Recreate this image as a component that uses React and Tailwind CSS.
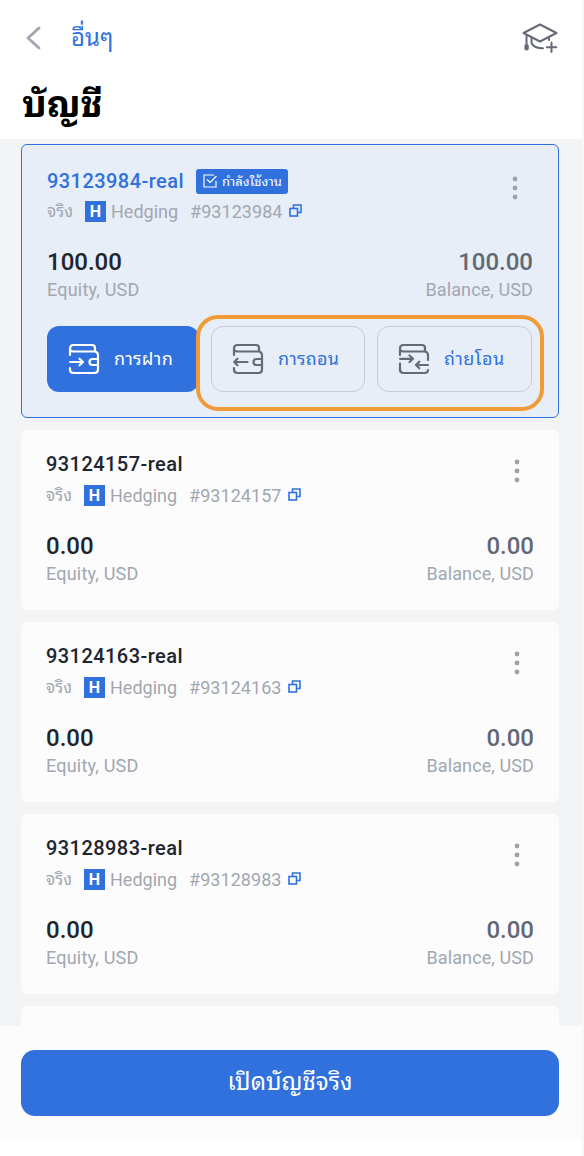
import React from 'react';
import clsx from 'clsx';

const accounts = [
    { id: '93123984', amount: '100.00', active: true },
    { id: '93124157', amount: '0.00' },
    { id: '93124163', amount: '0.00' },
    { id: '93128983', amount: '0.00' },
];

const WalletIcon = ({ type, className }) => (
    <svg width="32" height="32" viewBox="0 0 32 32" fill="none" stroke="currentColor" strokeWidth="2.2" strokeLinecap="round" strokeLinejoin="round" className={className}>
        <path d="M2 12V5.5Q2 2 5.5 2H24Q27 2 27 5V8M2 6Q2 8.5 5.5 8.5H26Q30 8.5 30 12.5" />
        {type === 'transfer' ? (
            <>
                <path d="M30 12.5V17M30 27Q30 30 26.5 30H5.5Q2 30 2 26.5V20.5" />
                <path d="M2 15.8H15M11.5 12.5L15 15.8L11.5 19" />
                <path d="M30 22H18M21.3 18.7L18 22L21.3 25.3" />
            </>
        ) : (
            <>
                <path d="M30 12.5V26.5Q30 30 26.5 30H5.5Q2 30 2 26.5V25" />
                <path d="M30 16H24.5Q21.5 16 21.5 19T24.5 22H30" />
                {type === 'deposit'
                    ? <path d="M2 19H15M11.5 15.7L15 19L11.5 22.3" />
                    : <path d="M15.5 19H2.5M5.5 15.7L2.2 19L5.5 22.3" />}
            </>
        )}
    </svg>
);

const GraduationIcon = () => (
    <svg width="36" height="30" viewBox="0 0 36 30" fill="none" stroke="currentColor" strokeWidth="2" strokeLinecap="round" strokeLinejoin="round">
        <path d="M1.5 10L18 1.5L34.5 10L18 18.5L1.5 10ZM4.5 11.5V22" />
        <path d="M9.5 14.5V20Q12 25.3 21 25.3M27 14.5V17" />
        <path d="M29.5 19.5V29M24.8 24.2H34.3" />
        <rect x="3.4" y="22" width="2.4" height="4.5" rx="1.1" fill="currentColor" />
    </svg>
);

const CopyIcon = () => (
    <svg width="13" height="13" viewBox="0 0 13 13" fill="none" stroke="#3071dd" strokeWidth="1.6">
        <path d="M4.5 4.5V1H12V8.5H8.8" />
        <rect x="1" y="4.5" width="7.5" height="7.5" />
    </svg>
);

const CheckIcon = () => (
    <svg width="14" height="14" viewBox="0 0 14 14" fill="none" stroke="white" strokeWidth="1.2">
        <path d="M11 1H1V13H13V7M4 5.5L7.2 8.5L13.5 2" />
    </svg>
);

const DotsIcon = () => (
    <svg width="6" height="24" viewBox="0 0 6 24" fill="#9ca1ab">
        <circle cx="3" cy="3" r="2.4" />
        <circle cx="3" cy="12" r="2.4" />
        <circle cx="3" cy="21" r="2.4" />
    </svg>
);

const ActionButton = ({ type, label, className }) => (
    <button
        className={clsx('flex h-[66px] items-center rounded-xl', className,
            type === 'deposit' ? 'bg-[#3071dd] pl-[21px] text-white' : 'border-[1.5px] border-[#c9ccd6] pl-5 text-[#3071dd]')}
    >
        <WalletIcon type={type} className={type === 'deposit' ? 'text-white' : 'text-[#666a77]'} />
        <span className={clsx('ml-3.5 pb-0.5 text-[18px] whitespace-nowrap', type === 'transfer' ? 'tracking-[0.5px]' : 'tracking-[0.3px]')}>{label}</span>
    </button>
);

const AccountCard = ({ account }) => {
    const { id, amount, active } = account;

    return (
        <section
            className={clsx('rounded-md', active
                ? 'relative h-[274px] border-[1.5px] border-[#3071dd] bg-[#e7eef7] px-[25px] pt-[22px]'
                : 'h-[180px] bg-[#fcfcfd] pt-5 pr-[25px] pl-[25px]')}
        >
            <div className="flex h-7 items-center">
                <h2 className={clsx('w-[137px] text-[20px] font-medium tracking-[0.44px]', active ? 'text-[#3071dd]' : 'text-[#20242d]')}>{id}-real</h2>
                {active && (
                    <span className="ml-3 flex h-[25px] w-[92px] items-center gap-[5px] rounded-[3px] bg-[#3071dd] pl-[7px] text-[13px] whitespace-nowrap text-white">
                        <CheckIcon />
                        <span className="pt-px">กำลังใช้งาน</span>
                    </span>
                )}
                <span className={clsx('ml-auto pt-3.5', active ? 'mr-[15px]' : 'mr-3.5')}><DotsIcon /></span>
            </div>
            <div className={clsx('flex h-6 items-center text-[18px] text-[#a2a7b1]', active ? 'mt-1' : 'mt-[5px]')}>
                <span className="w-[38px] pt-0.5 text-[17px]">จริง</span>
                <span className="mr-[5px] flex h-[21px] w-[21px] items-center justify-center bg-[#3071dd] pt-px text-[16px] font-bold text-white">H</span>
                <span className="w-[79px]">Hedging</span>
                <span className="mr-[7px] w-[92px] tracking-[0.05px]">#{id}</span>
                <span className="pb-0.5"><CopyIcon /></span>
            </div>
            <div className="mt-[23px] flex justify-between text-[24px] leading-8 font-medium">
                <span className="text-[#20242d]">{amount}</span>
                <span className="text-[#626875]">{amount}</span>
            </div>
            <div className="flex justify-between text-[18px] leading-6 text-[#a2a7b1]">
                <span className="tracking-[0.2px]">Equity, USD</span>
                <span className="tracking-[0.1px]">Balance, USD</span>
            </div>
            {active && (
                <>
                    <div className="mt-6 flex gap-3">
                        <ActionButton type="deposit" label="การฝาก" className="w-[152px]" />
                        <ActionButton type="withdraw" label="การถอน" className="w-[154px]" />
                        <ActionButton type="transfer" label="ถ่ายโอน" className="w-[155px]" />
                    </div>
                    <div className="pointer-events-none absolute top-[170px] left-[174px] h-[96px] w-[348px] rounded-[22px] border-4 border-[#f19a38]" />
                </>
            )}
        </section>
    );
};

const App = () => {
    return (
        <div className="flex h-[1156px] w-[584px] flex-col overflow-hidden border-r-2 border-[#f7f7f7] bg-white font-[Roboto,'Noto_Sans_Thai_Looped',Loma,Garuda,'Noto_Serif_Thai','Noto_Sans_Thai',sans-serif]">
            <header className="h-[139px] shrink-0 px-[22px]">
                <nav className="flex h-[75px] items-center">
                    <svg width="22" height="26" viewBox="0 0 22 26" fill="none" stroke="#a2a7b1" strokeWidth="3" strokeLinecap="round" strokeLinejoin="round">
                        <path d="M17 3L6 13L17 23" />
                    </svg>
                    <a className="ml-[27px] text-[24px] text-[#3071dd]">อื่นๆ</a>
                    <span className="mr-[2px] ml-auto text-[#666a77]"><GraduationIcon /></span>
                </nav>
                <h1 className="pt-0.5 text-[37px] leading-[56px] font-bold text-black">บัญชี</h1>
            </header>

            <main className="flex h-[887px] shrink-0 flex-col gap-3 overflow-hidden bg-[#f3f4f6] pt-[5px] pr-[23px] pl-[21px]">
                {accounts.map((account) => (
                    <div key={account.id} className="shrink-0">
                        <AccountCard account={account} />
                    </div>
                ))}
                <div className="h-10 shrink-0 rounded-md bg-[#fcfcfd]" />
            </main>

            <footer className="h-[114px] shrink-0 bg-[#fcfcfd] pt-6 pr-[23px] pl-[21px]">
                <button className="h-[66px] w-full rounded-[14px] bg-[#3071dd] pb-0.5 text-[24px] text-white">เปิดบัญชีจริง</button>
            </footer>
        </div>
    );
};

export default App;
